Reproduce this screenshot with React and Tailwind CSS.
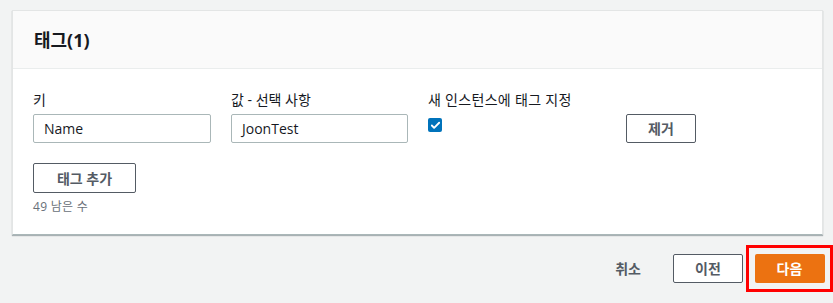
import { Check } from 'lucide-react'

const App = () => {
  return (
    <div className="w-[833px] h-[303px] bg-[#f2f3f3] pt-[10px] pl-[12px] text-[#16191f] font-['Open_Sans','Noto_Sans_CJK_KR',sans-serif]">
      {/* Card */}
      <div className="w-[811px] h-[225px] bg-white border border-[#e3e5e5] border-b-[#aab7b8] shadow-[0_1px_1px_0_rgba(0,28,36,0.3)]">
        <div className="h-[58px] bg-[#fafafa] border-b border-[#eaeded] pl-[21px] flex items-center">
          <h2 className="text-[18px] font-bold leading-none">태그(1)</h2>
        </div>

        <div className="pl-[20px] pt-[20px]">
          <div className="flex">
            <div className="w-[178px] mr-[20px]">
              <div className="text-[14px] leading-[22px] h-[22px] mb-[3px]">키</div>
              <div className="h-[29px] border border-[#aab7b8] rounded-[2px] px-[10px] flex items-center text-[14px]">Name</div>
            </div>
            <div className="w-[177px] mr-[20px]">
              <div className="text-[14px] leading-[22px] h-[22px] mb-[3px]">값 - 선택 사항</div>
              <div className="h-[29px] border border-[#aab7b8] rounded-[2px] px-[10px] flex items-center text-[14px]">JoonTest</div>
            </div>
            <div className="w-[198px] flex flex-col">
              <div className="text-[14px] leading-[22px] h-[22px] tracking-[0.3px]">새 인스턴스에 태그 지정</div>
              <div className="w-[14px] h-[14px] mt-[7px] bg-[#0073bb] rounded-[2px] flex items-center justify-center">
                <Check className="w-[11px] h-[11px] text-white" strokeWidth={4} />
              </div>
            </div>
            <div className="pt-[25px]">
              <button className="w-[70px] h-[29px] border border-[#545b64] rounded-[2px] text-[14px] font-semibold text-[#545b64] bg-white">제거</button>
            </div>
          </div>

          <button className="mt-[20px] w-[103px] h-[30px] border border-[#545b64] rounded-[2px] text-[14px] font-semibold text-[#545b64] bg-white">태그 추가</button>
          <div className="text-[12px] text-[#687078] mt-[5px] leading-[18px] tracking-[0.3px]">49 남은 수</div>
        </div>
      </div>

      {/* Footer */}
      <div className="flex items-center justify-end mt-[10px] w-[821px]">
        <span className="text-[14px] font-semibold text-[#545b64] mr-[32px]">취소</span>
        <button className="w-[70px] h-[29px] border border-[#545b64] rounded-[2px] text-[14px] font-semibold text-[#545b64] bg-white mr-[3px]">이전</button>
        <div className="border-[3px] border-[#ff0000] w-[87px] h-[47px] flex items-center justify-center">
          <button className="w-[70px] h-[29px] bg-[#ec7211] rounded-[2px] text-[14px] font-semibold text-white">다음</button>
        </div>
      </div>
    </div>
  )
}

export default App
